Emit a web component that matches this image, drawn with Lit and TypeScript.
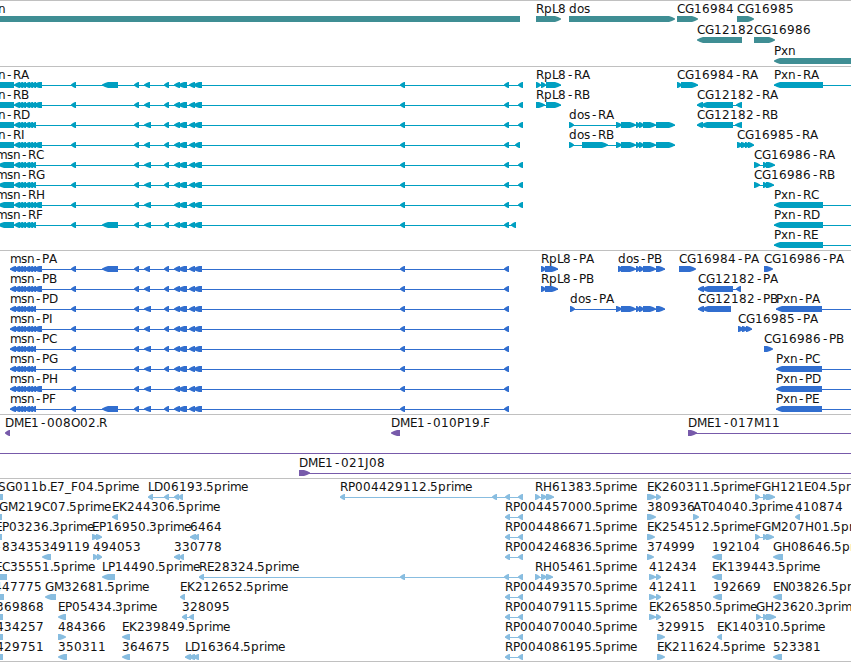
import { LitElement, html, svg, css } from 'lit';
import { customElement, property } from 'lit/decorators.js';

type Span = [number, number];
type Strand = '+' | '-';

interface Feature {
  row: number;
  label: string;
  x: number;
  strand: Strand;
  exons: Span[];
  // right end of the connecting line when it runs past the last exon
  lineEnd?: number;
}

interface Track {
  kind: string;
  height: number;
  pitch: number;
  features: Feature[];
}

const VIEW_WIDTH = 851;
const BAR_TOP = 15;
const BAR_BOTTOM = 21;
const HEAD = 6;

// whole pixel advances for the label font
const ADVANCE: Record<string, number> = {
  A: 8, B: 8, C: 8, D: 9, E: 7, F: 7, G: 9, H: 9, I: 4, J: 4, K: 8, L: 6,
  M: 10, O: 9, P: 7, R: 8, S: 8, T: 7, b: 8, d: 8, e: 7, i: 3, m: 11, n: 7,
  o: 7, p: 8, r: 5, s: 6, x: 7, '-': 8, '.': 3, _: 6,
};

function glyphPositions(text: string, x: number): string {
  const positions: number[] = [];
  for (const char of text) {
    // the dash sits in the middle of its wider cell
    positions.push(char === '-' ? x + 2 : x);
    x += ADVANCE[char] ?? 8;
  }
  return positions.join(' ');
}

function f(
  row: number,
  label: string,
  x: number,
  strand: Strand,
  exons: Span[],
  lineEnd?: number
): Feature {
  return { row, label, x, strand, exons, lineEnd };
}

const LADDER: Span[] = [[14, 20], [17, 23], [20, 26], [24, 30], [27, 33], [31, 36]];

function msn(
  opts: { start?: Span[]; wide?: boolean; big?: boolean; mid?: number; skip?: boolean },
  tail: Span[]
): Span[] {
  return [
    ...(opts.start ?? []),
    ...LADDER,
    ...(opts.wide ? [[33, 42] as Span] : []),
    [71, 76],
    ...(opts.big ? [[102, 118] as Span] : []),
    [134, 139],
    [144, opts.mid ?? 151],
    ...(opts.skip ? [] : [[164, 169] as Span]),
    [174, 180],
    [178, 187],
    [189, 195],
    [193, 202],
    [400, 405],
    [504, 509],
    ...tail,
  ];
}

const OPEN: Span[] = [[-10, 14]];
const TIP: Span[] = [[-2, 14]];
const P_START: Span[] = [[10, 16]];
const END: Span[] = [[518, 523]];
const DOS: Span[] = [[616, 622], [621, 636], [636, 640], [639, 644], [643, 656]];
const RP: Span[] = [[505, 510], [518, 523]];

const TRACKS: Track[] = [
  {
    kind: 'gene',
    height: 65,
    pitch: 21,
    features: [
      f(0, 'msn', -19, '-', [[-10, 520]]),
      f(0, 'RpL8', 536, '+', [[536, 561]]),
      f(0, 'dos', 569, '+', [[569, 675]]),
      f(0, 'CG16984', 677, '+', [[677, 698]]),
      f(0, 'CG16985', 737, '+', [[737, 754]]),
      f(1, 'CG12182', 697, '-', [[697, 742]]),
      f(1, 'CG16986', 754, '+', [[754, 775]]),
      f(2, 'Pxn', 774, '-', [[774, 870]]),
    ],
  },
  {
    kind: 'transcript',
    height: 183,
    pitch: 20,
    features: [
      f(0, 'msn-RA', -19, '-', msn({ start: OPEN, wide: true, big: true, mid: 150 }, END)),
      f(1, 'msn-RB', -19, '-', msn({ start: OPEN, wide: true, mid: 150 }, END)),
      f(2, 'msn-RD', -19, '-', msn({ start: OPEN }, END)),
      f(3, 'msn-RI', -19, '-', msn({ start: OPEN, wide: true, mid: 150 }, [[515, 520]])),
      f(4, 'msn-RC', -4, '-', msn({ start: TIP }, END)),
      f(5, 'msn-RG', -4, '-', msn({ start: TIP }, END)),
      f(6, 'msn-RH', -4, '-', msn({ start: TIP, wide: true, skip: true }, END)),
      f(7, 'msn-RF', -4, '-', msn({ start: TIP, big: true }, [[511, 516]])),
      f(0, 'RpL8-RA', 536, '+', [[536, 541], [541, 546], [546, 561]]),
      f(1, 'RpL8-RB', 536, '+', [[536, 545], [546, 561]]),
      f(2, 'dos-RA', 569, '+', [[569, 574], ...DOS, [656, 675]]),
      f(3, 'dos-RB', 569, '+', [[569, 574], [582, 608], ...DOS, [656, 675]]),
      f(0, 'CG16984-RA', 677, '+', [[677, 682], [681, 698]]),
      f(1, 'CG12182-RA', 697, '-', [[697, 703], [701, 733], [736, 742]]),
      f(2, 'CG12182-RB', 697, '-', [[697, 703], [701, 733], [735, 742]]),
      f(0, 'Pxn-RA', 774, '-', [[774, 823]], VIEW_WIDTH),
      f(3, 'CG16985-RA', 737, '+', [[737, 743], [741, 747], [745, 750], [748, 754]]),
      f(4, 'CG16986-RA', 754, '+', [[754, 760], [763, 768], [766, 775]]),
      f(5, 'CG16986-RB', 754, '+', [[754, 760], [763, 768], [766, 774]]),
      f(6, 'Pxn-RC', 774, '-', [[774, 823]], VIEW_WIDTH),
      f(7, 'Pxn-RD', 774, '-', [[774, 823]], VIEW_WIDTH),
      f(8, 'Pxn-RE', 774, '-', [[774, 823]], VIEW_WIDTH),
    ],
  },
  {
    kind: 'protein',
    height: 163,
    pitch: 20,
    features: [
      f(0, 'msn-PA', 10, '-', msn({ start: P_START, wide: true, big: true, mid: 150 }, [])),
      f(1, 'msn-PB', 10, '-', msn({ start: P_START, wide: true, mid: 150 }, [])),
      f(2, 'msn-PD', 10, '-', msn({ start: P_START }, [])),
      f(3, 'msn-PI', 10, '-', msn({ start: P_START, wide: true, mid: 150 }, [])),
      f(4, 'msn-PC', 10, '-', msn({ start: P_START }, [])),
      f(5, 'msn-PG', 10, '-', msn({ start: P_START }, [])),
      f(6, 'msn-PH', 10, '-', msn({ start: P_START, wide: true, skip: true }, [])),
      f(7, 'msn-PF', 10, '-', msn({ start: P_START, big: true }, [])),
      f(0, 'RpL8-PA', 541, '+', [[541, 546], [545, 558]]),
      f(1, 'RpL8-PB', 541, '+', [[541, 546], [545, 558]]),
      f(0, 'dos-PB', 618, '+', [[618, 623], ...DOS.slice(1), [656, 665]]),
      f(2, 'dos-PA', 570, '+', [[570, 575], ...DOS, [656, 665]]),
      f(0, 'CG16984-PA', 679, '+', [[679, 696]]),
      f(0, 'CG16986-PA', 764, '+', [[764, 773]]),
      f(1, 'CG12182-PA', 698, '-', [[698, 704], [702, 733], [736, 741]]),
      f(2, 'CG12182-PB', 698, '-', [[698, 704], [702, 731]]),
      f(2, 'Pxn-PA', 776, '-', [[776, 822]], VIEW_WIDTH),
      f(3, 'CG16985-PA', 738, '+', [[738, 744], [742, 748], [746, 752]]),
      f(4, 'CG16986-PB', 764, '+', [[764, 773]]),
      f(5, 'Pxn-PC', 776, '-', [[776, 822]], VIEW_WIDTH),
      f(6, 'Pxn-PD', 776, '-', [[776, 822]], VIEW_WIDTH),
      f(7, 'Pxn-PE', 776, '-', [[776, 822]], VIEW_WIDTH),
    ],
  },
  {
    kind: 'bac',
    height: 63,
    pitch: 20,
    features: [
      f(0, 'DME1-008O02.R', 5, '-', [[5, 10]]),
      f(0, 'DME1-010P19.F', 391, '-', [[391, 400]]),
      f(0, 'DME1-017M11', 688, '+', [[688, 697]], VIEW_WIDTH),
      f(1, '', 0, '+', [[-10, -2]], VIEW_WIDTH),
      f(2, 'DME1-021J08', 299, '+', [[299, 310]], VIEW_WIDTH),
    ],
  },
  {
    kind: 'est',
    height: 182,
    pitch: 20,
    features: [
      f(0, 'SG011b.E7_F04.5prime', -2, '-', [[-8, 3]]),
      f(0, 'LD06193.5prime', 148, '-', [[148, 153], [164, 169], [174, 179], [178, 183]]),
      f(0, 'RP004429112.5prime', 340, '-', [[340, 345], [492, 497], ...RP]),
      f(0, 'RH61383.5prime', 535, '+', [[535, 540], [541, 547], [546, 554]]),
      f(0, 'EK260311.5prime', 647, '+', [[647, 656], [656, 661]]),
      f(0, 'FGH121E04.5prime', 755, '+', [[755, 760], [763, 768], [766, 775]]),

      f(1, 'GM219C07.5prime', -1, '-', [[-8, 2]]),
      f(1, 'EK244306.5prime', 112, '-', [[112, 118]]),
      f(1, 'RP004457000.5prime', 505, '-', RP),
      f(1, '380936', 647, '+', [[647, 656]]),
      f(1, 'AT04040.3prime', 693, '+', [[693, 699]]),
      f(1, '410874', 795, '-', [[795, 800]]),

      f(2, 'EP03236.3prime', -5, '-', [[-8, 2]]),
      f(2, 'EP16950.3prime', 92, '+', [[92, 98], [96, 102]]),
      f(2, '6464', 190, '-', [[190, 196], [194, 199]]),
      f(2, 'RP004486671.5prime', 505, '-', RP),
      f(2, 'EK254512.5prime', 647, '+', [[647, 655]]),
      f(2, 'FGM207H01.5prime', 755, '+', [[755, 760], [763, 768], [766, 774]]),

      f(3, '-83435', -6, '-', []),
      f(3, '349119', 42, '-', [[42, 51]]),
      f(3, '494053', 93, '+', [[93, 98], [97, 102]]),
      f(3, '330778', 174, '-', [[174, 180], [179, 184]]),
      f(3, 'RP004246836.5prime', 505, '-', RP),
      f(3, '374999', 647, '+', [[647, 654]]),
      f(3, '192104', 712, '-', [[712, 722]]),
      f(3, 'GH08646.5prime', 773, '-', [[773, 783]]),

      f(4, 'EC35551.5prime', -5, '-', [[-8, 7]]),
      f(4, 'LP14490.5prime', 102, '-', [[102, 115]]),
      f(4, 'RE28324.5prime', 199, '-', [[199, 204], [400, 405], [504, 509], [518, 523]]),
      f(4, 'RH05461.5prime', 535, '+', [[535, 540], [541, 547], [546, 553]]),
      f(4, '412434', 649, '+', [[649, 656], [656, 661]]),
      f(4, 'EK139443.5prime', 712, '-', [[712, 722]]),

      f(5, '447775', -6, '-', [[-8, 4]]),
      f(5, 'GM32681.5prime', 45, '-', [[45, 56]]),
      f(5, 'EK212652.5prime', 180, '-', [[180, 185]]),
      f(5, 'RP004493570.5prime', 505, '-', RP),
      f(5, '412411', 649, '+', [[649, 656], [656, 661]]),
      f(5, '192669', 713, '-', [[713, 722]]),
      f(5, 'EN03826.5prime', 773, '-', [[773, 782]]),

      f(6, '369868', -4, '-', [[-8, 3]]),
      f(6, 'EP05434.3prime', 58, '-', [[58, 66]]),
      f(6, '328095', 182, '-', [[182, 187], [189, 194]]),
      f(6, 'RP004079115.5prime', 505, '-', RP),
      f(6, 'EK265850.5prime', 649, '+', [[649, 656], [656, 661]]),
      f(6, 'GH23620.3prime', 756, '+', [[756, 761], [763, 768], [766, 776]]),

      f(7, '434257', -4, '-', [[-8, 3]]),
      f(7, '484366', 58, '+', [[58, 66]]),
      f(7, 'EK239849.5prime', 122, '-', [[122, 130]]),
      f(7, 'RP004070040.5prime', 505, '-', RP),
      f(7, '329915', 657, '+', [[657, 665]]),
      f(7, 'EK140310.5prime', 717, '-', [[717, 722]]),

      f(8, '429751', -4, '-', [[-8, 3]]),
      f(8, '350311', 58, '-', [[58, 67]]),
      f(8, '364675', 122, '-', [[122, 130]]),
      f(8, 'LD16364.5prime', 185, '-', [[185, 191], [189, 195], [193, 199]]),
      f(8, 'RP004086195.5prime', 505, '-', RP),
      f(8, 'EK211624.5prime', 657, '+', [[657, 665]]),
      f(8, '523381', 773, '-', [[773, 782]]),
    ],
  },
];

/**
 * One horizontal band of stacked features
 */
@customElement('feature-track')
export class FeatureTrack extends LitElement {
  static styles = css`
    :host {
      display: block;
      border-top: 1px solid #c0c0c0;
    }

    .canvas {
      display: block;
      overflow: hidden;
    }

    .label {
      font-family: 'DejaVu Sans', sans-serif;
      font-size: 12px;
      fill: #111;
    }

    .line {
      shape-rendering: crispEdges;
    }

    .gene {
      fill: #3f8e94;
    }

    .transcript {
      fill: #009fc1;
    }

    .protein {
      fill: #316ecf;
    }

    .bac {
      fill: #775aaa;
    }

    .est {
      fill: #88bde0;
    }
  `;

  @property({ attribute: false })
  track!: Track;

  render() {
    const { kind, height, features } = this.track;
    return html`
      <svg class="canvas" width=${VIEW_WIDTH} height=${height}>
        <g class=${kind}>${features.map((item) => this._renderShape(item))}</g>
        ${features.map((item) => this._renderLabel(item))}
      </svg>
    `;
  }

  private _renderShape(item: Feature) {
    if (!item.exons.length) {
      return '';
    }
    const y = item.row * this.track.pitch;
    const start = item.exons[0][0];
    const end = item.lineEnd ?? item.exons[item.exons.length - 1][1];
    // a single solid block needs no connecting line
    const line =
      item.exons.length > 1 || item.lineEnd
        ? svg`<rect class="line" x=${start} y=${y + 18} width=${end - start} height="1" />`
        : '';
    return svg`
      ${line}
      ${item.exons.map((exon) => svg`<polygon points=${this._arrow(exon, item.strand, y)} />`)}
    `;
  }

  private _arrow([start, end]: Span, strand: Strand, y: number) {
    const top = y + BAR_TOP;
    const bottom = y + BAR_BOTTOM;
    const mid = (top + bottom) / 2;
    const head = Math.min(HEAD, end - start - 1);
    if (strand === '-') {
      const neck = start + head;
      const cheek = start + head / 2;
      return `${start},${mid - 0.5} ${cheek},${mid - 2} ${neck},${top} ${end},${top} ${end},${bottom} ${neck},${bottom} ${cheek},${mid + 2} ${start},${mid + 0.5}`;
    }
    const neck = end - head;
    const cheek = end - head / 2;
    return `${start},${top} ${neck},${top} ${cheek},${mid - 2} ${end},${mid - 0.5} ${end},${mid + 0.5} ${cheek},${mid + 2} ${neck},${bottom} ${start},${bottom}`;
  }

  private _renderLabel(item: Feature) {
    if (!item.label) {
      return '';
    }
    return svg`
      <text class="label" x=${glyphPositions(item.label, item.x)} y=${item.row * this.track.pitch + 12}>${item.label}</text>
    `;
  }
}

@customElement('app-root')
export class AppRoot extends LitElement {
  static styles = css`
    :host {
      display: block;
      width: 851px;
      height: 662px;
      overflow: hidden;
      background: #fff;
    }

    .tracks {
      display: flex;
      flex-direction: column;
      border-bottom: 1px solid #c0c0c0;
    }
  `;

  render() {
    return html`
      <div class="tracks">
        ${TRACKS.map((track) => html`<feature-track .track=${track}></feature-track>`)}
      </div>
    `;
  }
}

declare global {
  interface HTMLElementTagNameMap {
    'feature-track': FeatureTrack;
    'app-root': AppRoot;
  }
}
